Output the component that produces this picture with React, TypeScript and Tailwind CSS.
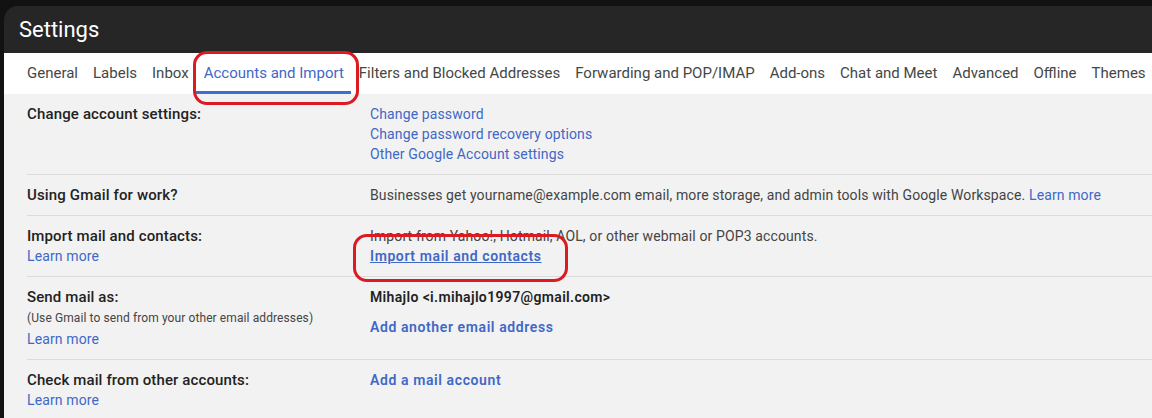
import React from 'react';

const tabs = [
  'General',
  'Labels',
  'Inbox',
  'Accounts and Import',
  'Filters and Blocked Addresses',
  'Forwarding and POP/IMAP',
  'Add-ons',
  'Chat and Meet',
  'Advanced',
  'Offline',
  'Themes',
];

const font = { fontFamily: 'Roboto, "Open Sans", Arial, sans-serif' };

const Link = ({ children, bold = false }: { children: React.ReactNode; bold?: boolean }) => (
  <a className={`text-[#3f68c6] cursor-pointer ${bold ? 'font-semibold tracking-[0.6px]' : ''}`}>{children}</a>
);

export default function App() {
  return (
    <div className="relative w-[1152px] h-[418px] overflow-hidden bg-[#121212] pt-[6px] pl-[4px]" style={font}>
      <div className="rounded-tl-[14px] bg-[#262626] h-full overflow-hidden">
        {/* header */}
        <div className="h-[47px] flex items-center px-[15px]">
          <h1 className="text-white text-[22px] leading-none">Settings</h1>
        </div>

        {/* tabs */}
        <div className="h-[41px] bg-white flex pl-[15.5px] text-[15px] text-[#444746]">
          {tabs.map((t) => (
            <div
              key={t}
              className={`px-[7.5px] flex items-center whitespace-nowrap border-b-[3px] pt-[3px] ${
                t === 'Accounts and Import' ? 'border-[#3d6fcf] text-[#3f68c6]' : 'border-transparent'
              }`}
            >
              {t}
            </div>
          ))}
        </div>

        {/* content */}
        <div className="bg-[#f2f2f2] h-full pl-[23px] text-[14px] leading-[20px] tracking-[0.12px] text-[#222]">
          {/* row 1 */}
          <div className="flex py-[10px] border-b border-[#dcdcdc]">
            <div className="w-[343px] font-medium text-[15px] tracking-[0.15px]">Change account settings:</div>
            <div className="flex flex-col">
              <Link>Change password</Link>
              <Link>Change password recovery options</Link>
              <Link>Other Google Account settings</Link>
            </div>
          </div>

          {/* row 2 */}
          <div className="flex py-[10px] border-b border-[#dcdcdc]">
            <div className="w-[343px] font-medium text-[15px] tracking-[0.15px]">Using Gmail for work?</div>
            <div className="text-[#444] whitespace-nowrap">
              Businesses get yourname@example.com email, more storage, and admin tools with Google Workspace.{' '}
              <Link>Learn more</Link>
            </div>
          </div>

          {/* row 3 */}
          <div className="flex py-[10px] border-b border-[#dcdcdc]">
            <div className="w-[343px] flex flex-col">
              <span className="font-medium text-[15px]">Import mail and contacts:</span>
              <Link>Learn more</Link>
            </div>
            <div className="flex flex-col text-[#444]">
              <span>Import from Yahoo!, Hotmail, AOL, or other webmail or POP3 accounts.</span>
              <a className="text-[#3f68c6] font-semibold tracking-[0.6px] underline cursor-pointer">Import mail and contacts</a>
            </div>
          </div>

          {/* row 4 */}
          <div className="flex py-[10px] border-b border-[#dcdcdc]">
            <div className="w-[343px] flex flex-col">
              <span className="font-medium text-[15px]">Send mail as:</span>
              <span className="text-[12px] text-[#444] leading-[22px] tracking-[0.1px]">(Use Gmail to send from your other email addresses)</span>
              <Link>Learn more</Link>
            </div>
            <div className="flex flex-col">
              <span className="font-semibold tracking-[0.35px]">Mihajlo &lt;i.mihajlo1997@gmail.com&gt;</span>
              <span className="mt-[10px]">
                <Link bold>Add another email address</Link>
              </span>
            </div>
          </div>

          {/* row 5 */}
          <div className="flex py-[10px]">
            <div className="w-[343px] flex flex-col">
              <span className="font-medium text-[15px]">Check mail from other accounts:</span>
              <Link>Learn more</Link>
            </div>
            <div className="flex flex-col">
              <Link bold>Add a mail account</Link>
            </div>
          </div>
        </div>
      </div>

      {/* red hand-drawn annotations */}
      <div className="absolute left-[193px] top-[51px] w-[166px] h-[54px] border-[3px] border-[#dc1a22] rounded-[14px] pointer-events-none" />
      <div className="absolute left-[353px] top-[234px] w-[215px] h-[48px] border-[3px] border-[#dc1a22] rounded-[14px] pointer-events-none" />
    </div>
  );
}
